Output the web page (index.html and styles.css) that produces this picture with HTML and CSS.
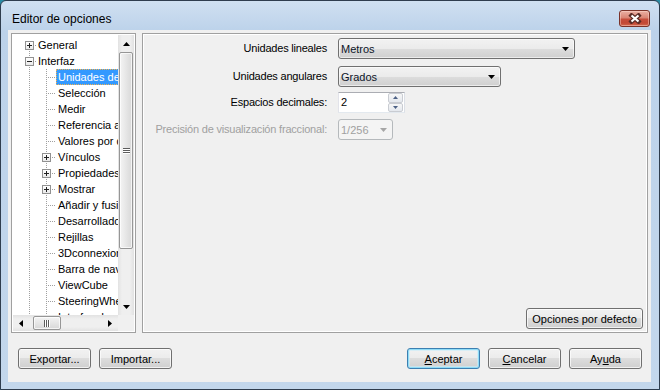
FILE: index.html
```html
<!DOCTYPE html>
<html lang="es">
<head>
  <meta charset="UTF-8">
  <title>Editor de opciones</title>
  <link rel="stylesheet" href="styles.css">
</head>
<body>
  <div class="window">
    <div class="titlebar">
      <span class="title">Editor de opciones</span>
      <button class="close-btn" aria-label="Cerrar">
        <svg width="14" height="11" viewBox="0 0 14 11"><path d="M3.5 2.5 L10.5 8.5 M10.5 2.5 L3.5 8.5" stroke="#5a2b26" stroke-width="4.4" stroke-linecap="square"/><path d="M3.5 2.5 L10.5 8.5 M10.5 2.5 L3.5 8.5" stroke="#fff" stroke-width="2.2"/></svg>
      </button>
    </div>

    <div class="client">
      <div class="main">
        <div class="tree">
          <div class="tree-view">
            <ul class="nodes">
              <li class="row"><span class="node root first"><i class="box plus"></i></span><span class="label">General</span></li>
              <li class="row"><span class="node root"><i class="box"></i></span><span class="label">Interfaz</span></li>
              <li class="row"><span class="guide"></span><span class="node"></span><span class="label selected">Unidades de visualización</span></li>
              <li class="row"><span class="guide"></span><span class="node"></span><span class="label">Selección</span></li>
              <li class="row"><span class="guide"></span><span class="node"></span><span class="label">Medir</span></li>
              <li class="row"><span class="guide"></span><span class="node"></span><span class="label">Referencia a objetos</span></li>
              <li class="row"><span class="guide"></span><span class="node"></span><span class="label">Valores por defecto</span></li>
              <li class="row"><span class="guide"></span><span class="node"><i class="box plus"></i></span><span class="label">Vínculos</span></li>
              <li class="row"><span class="guide"></span><span class="node"><i class="box plus"></i></span><span class="label">Propiedades</span></li>
              <li class="row"><span class="guide"></span><span class="node"><i class="box plus"></i></span><span class="label">Mostrar</span></li>
              <li class="row"><span class="guide"></span><span class="node"></span><span class="label">Añadir y fusionar</span></li>
              <li class="row"><span class="guide"></span><span class="node"></span><span class="label">Desarrollador</span></li>
              <li class="row"><span class="guide"></span><span class="node"></span><span class="label">Rejillas</span></li>
              <li class="row"><span class="guide"></span><span class="node"></span><span class="label">3Dconnexion</span></li>
              <li class="row"><span class="guide"></span><span class="node"></span><span class="label">Barra de navegación</span></li>
              <li class="row"><span class="guide"></span><span class="node"></span><span class="label">ViewCube</span></li>
              <li class="row"><span class="guide"></span><span class="node"></span><span class="label">SteeringWheels</span></li>
              <li class="row"><span class="guide"></span><span class="node"></span><span class="label">Interfaz de usuario</span></li>
            </ul>
          </div>

          <div class="vscroll">
            <span class="sb-btn"><svg width="7" height="4" viewBox="0 0 7 4"><path d="M0 4H7L3.5 0Z"/></svg></span>
            <span class="thumb-v"><span class="grip-v"></span></span>
            <span class="sb-fill"></span>
            <span class="sb-btn"><svg width="7" height="4" viewBox="0 0 7 4"><path d="M0 0H7L3.5 4Z"/></svg></span>
          </div>

          <div class="hscroll">
            <span class="sb-btn"><svg width="4" height="7" viewBox="0 0 4 7"><path d="M4 0V7L0 3.5Z"/></svg></span>
            <span class="thumb-h"><span class="grip-h"></span></span>
            <span class="sb-fill"></span>
            <span class="sb-btn"><svg width="4" height="7" viewBox="0 0 4 7"><path d="M0 0V7L4 3.5Z"/></svg></span>
          </div>

          <div class="corner"></div>
        </div>

        <div class="panel">
          <div class="form">
            <span class="lbl">Unidades lineales</span>
            <div class="combo wide"><span>Metros</span><svg width="7" height="4" viewBox="0 0 7 4"><path d="M0 0H7L3.5 4Z"/></svg></div>

            <span class="lbl">Unidades angulares</span>
            <div class="combo mid"><span>Grados</span><svg width="7" height="4" viewBox="0 0 7 4"><path d="M0 0H7L3.5 4Z"/></svg></div>

            <span class="lbl">Espacios decimales:</span>
            <div class="spinner">
              <span class="spin-value">2</span>
              <span class="spin-btns">
                <span class="spin-btn"><svg width="5" height="3" viewBox="0 0 5 3"><path d="M0 3H5L2.5 0Z"/></svg></span>
                <span class="spin-btn"><svg width="5" height="3" viewBox="0 0 5 3"><path d="M0 0H5L2.5 3Z"/></svg></span>
              </span>
            </div>

            <span class="lbl disabled">Precisión de visualización fraccional:</span>
            <div class="combo small is-disabled"><span>1/256</span><svg width="7" height="4" viewBox="0 0 7 4"><path d="M0 0H7L3.5 4Z"/></svg></div>
          </div>

          <div class="panel-footer">
            <button class="btn defaults">Opciones por defecto</button>
          </div>
        </div>
      </div>

      <div class="footer">
        <button class="btn">Exportar...</button>
        <button class="btn">Importar...</button>
        <button class="btn default push"><u>A</u>ceptar</button>
        <button class="btn"><u>C</u>ancelar</button>
        <button class="btn">Ay<u>u</u>da</button>
      </div>
    </div>
  </div>
</body>
</html>
```

FILE: styles.css
```css
* {
  box-sizing: border-box;
}

body {
  margin: 0;
  font-family: "Liberation Sans", Arial, sans-serif;
  font-size: 11px;
  color: #000;
  background: #2a8ca5;
}

.window {
  width: 660px;
  height: 390px;
  border: 1px solid #2f3d4e;
  border-radius: 6px 6px 0 0;
  background: linear-gradient(#d0e0f1, #bcd2ea 30px, #c3d7ec);
  display: flex;
  flex-direction: column;
}

/* title bar */
.titlebar {
  height: 29px;
  display: flex;
  align-items: center;
  padding: 6px 9px 0 11px;
}

.title {
  font-size: 12px;
  color: #000;
}

.close-btn {
  margin-left: auto;
  width: 31px;
  height: 17px;
  padding: 0;
  border: 1px solid #7a3229;
  border-radius: 3px;
  background: linear-gradient(#eab0a4, #d98575 45%, #c64d3c 55%, #c24835 80%, #d4694f);
  box-shadow: inset 0 0 0 1px rgba(255, 220, 210, 0.45);
  display: flex;
  align-items: center;
  justify-content: center;
}

.close-btn svg {
  display: block;
}

/* client area */
.client {
  flex: 1;
  margin: 0 8px 7px 7px;
  background: #f0f0f0;
  display: flex;
  flex-direction: column;
  padding: 3px 3px 0;
}

.main {
  display: flex;
  gap: 6px;
  height: 300px;
}

/* tree */
.tree {
  width: 125px;
  flex: none;
  border: 1px solid #a0a0a0;
  padding: 1px;
  background: #fff;
  display: grid;
  grid-template-columns: 105px 16px;
  grid-template-rows: 280px 16px;
}

.tree-view {
  overflow: hidden;
  background: #fff;
  padding-top: 2px;
}

.nodes {
  list-style: none;
  margin: 0;
  padding: 0 0 0 12px;
}

.row {
  display: flex;
  height: 16px;
  white-space: nowrap;
}

.guide {
  flex: none;
  width: 17px;
  background: repeating-linear-gradient(#a0a0a0 0 1px, transparent 1px 2px) 4px 0 / 1px 100% no-repeat;
}

.node {
  flex: none;
  width: 14px;
  padding-top: 4px;
  background:
    repeating-linear-gradient(#a0a0a0 0 1px, transparent 1px 2px) 4px 0 / 1px 100% no-repeat,
    repeating-linear-gradient(to right, #a0a0a0 0 1px, transparent 1px 2px) 6px 8px / 9px 1px no-repeat;
}

.node.root {
  width: 11px;
}

.node.first {
  background:
    repeating-linear-gradient(#a0a0a0 0 1px, transparent 1px 2px) 4px 8px / 1px 8px no-repeat,
    repeating-linear-gradient(to right, #a0a0a0 0 1px, transparent 1px 2px) 6px 8px / 9px 1px no-repeat;
}

.box {
  display: block;
  width: 9px;
  height: 9px;
  border: 1px solid #919191;
  background: linear-gradient(#222, #222) center / 5px 1px no-repeat, linear-gradient(#fff, #e9e9e9);
}

.box.plus {
  background:
    linear-gradient(#222, #222) center / 5px 1px no-repeat,
    linear-gradient(#222, #222) center / 1px 5px no-repeat,
    linear-gradient(#fff, #e9e9e9);
}

.label {
  flex: none;
  padding: 0 2px;
  line-height: 16px;
}

.label.selected {
  background: #3399ff;
  color: #fff;
  outline: 1px dotted #f3b24d;
  outline-offset: -1px;
}

/* scrollbars */
.vscroll,
.hscroll {
  display: flex;
  background: #ebebeb;
}

.vscroll {
  flex-direction: column;
  background: linear-gradient(to right, #e2e2e2, #efefef 4px, #efefef 12px, #e2e2e2);
}

.hscroll {
  background: linear-gradient(#e2e2e2, #efefef 4px, #efefef 12px, #e2e2e2);
}

.sb-btn {
  flex: none;
  display: flex;
  align-items: center;
  justify-content: center;
}

.vscroll .sb-btn {
  height: 17px;
}

.hscroll .sb-btn {
  width: 16px;
}

.sb-btn svg {
  display: block;
  fill: #000;
}

.sb-fill {
  flex: 1;
}

.thumb-v {
  height: 197px;
  margin: 0 1px;
  border: 1px solid #969696;
  border-radius: 2px;
  background: linear-gradient(to right, #f4f4f4, #e6e6e6 50%, #d8d8d8);
  box-shadow: inset 0 0 0 1px rgba(255, 255, 255, 0.7);
  display: flex;
  align-items: center;
  justify-content: center;
}

.grip-v {
  width: 7px;
  height: 6px;
  background: repeating-linear-gradient(#5c5c5c 0 1px, #fff 1px 2px);
}

.thumb-h {
  width: 28px;
  margin: 1px 0 1px 4px;
  border: 1px solid #969696;
  border-radius: 2px;
  background: linear-gradient(#f4f4f4, #e6e6e6 50%, #d8d8d8);
  box-shadow: inset 0 0 0 1px rgba(255, 255, 255, 0.7);
  display: flex;
  align-items: center;
  justify-content: center;
}

.grip-h {
  width: 6px;
  height: 7px;
  background: repeating-linear-gradient(to right, #5c5c5c 0 1px, #fff 1px 2px);
}

.corner {
  background: #f0f0f0;
}

/* options panel */
.panel {
  flex: 1;
  border: 1px solid #a0a0a0;
  padding: 1px;
  box-shadow: inset 0 0 0 1px #fff;
  display: flex;
  flex-direction: column;
}

.form {
  display: grid;
  grid-template-columns: 183px auto;
  grid-template-rows: 28px 26px 27px 21px;
  column-gap: 11px;
  padding-top: 3px;
}

.lbl {
  text-align: right;
  line-height: 21px;
  white-space: nowrap;
  letter-spacing: -0.2px;
}

.lbl.disabled {
  color: #a0a0a0;
}

.combo {
  height: 21px;
  justify-self: start;
  display: flex;
  align-items: center;
  justify-content: space-between;
  padding: 0 5px 0 2px;
  border: 1px solid #707070;
  border-radius: 3px;
  background: linear-gradient(#f2f2f2, #ebebeb 50%, #dddddd 50%, #cfcfcf);
  box-shadow: inset 0 0 0 1px rgba(255, 255, 255, 0.6);
  color: #0c1428;
}

.combo svg {
  display: block;
  fill: #000;
}

.combo.wide {
  width: 237px;
}

.combo.mid {
  width: 163px;
}

.combo.small {
  width: 55px;
}

.combo.is-disabled {
  border-color: #b5b9bc;
  background: #f4f4f4;
  box-shadow: none;
  color: #a0a0a0;
}

.combo.is-disabled svg {
  fill: #a6a6a6;
}

.spinner {
  width: 67px;
  height: 21px;
  justify-self: start;
  display: flex;
  border: 1px solid #abadb3;
  border-color: #abadb3 #dbdfe6 #e3e9ef #e2e3ea;
  background: #fff;
}

.spin-value {
  flex: 1;
  padding-left: 2px;
  line-height: 19px;
}

.spin-btns {
  width: 15px;
  margin: 0 1px 0 0;
  display: flex;
  flex-direction: column;
}

.spin-btn {
  flex: 1;
  display: flex;
  align-items: center;
  justify-content: center;
  border: 1px solid #c9ccd2;
  border-radius: 2px;
  background: linear-gradient(#f7f7f7, #e4e8ee);
}

.spin-btn svg {
  display: block;
  fill: #4d6185;
}

.panel-footer {
  margin-top: auto;
  display: flex;
  justify-content: flex-end;
  padding: 0 3px 2px 0;
}

/* buttons */
.btn {
  height: 21px;
  width: 73px;
  padding: 0;
  font: inherit;
  color: #000;
  border: 1px solid #707070;
  border-radius: 3px;
  background: linear-gradient(#f2f2f2, #ebebeb 50%, #dddddd 50%, #cfcfcf);
  box-shadow: inset 0 0 0 1px rgba(255, 255, 255, 0.7);
}

.btn.defaults {
  width: 117px;
}

.btn.default {
  border-color: #3c7fb1;
  box-shadow: inset 0 0 0 1px #8fdcf7, inset 0 0 0 2px rgba(200, 236, 250, 0.6);
}

.footer {
  display: flex;
  gap: 8px;
  padding: 15px 6px 0 7px;
}

.footer .push {
  margin-left: auto;
}
```
